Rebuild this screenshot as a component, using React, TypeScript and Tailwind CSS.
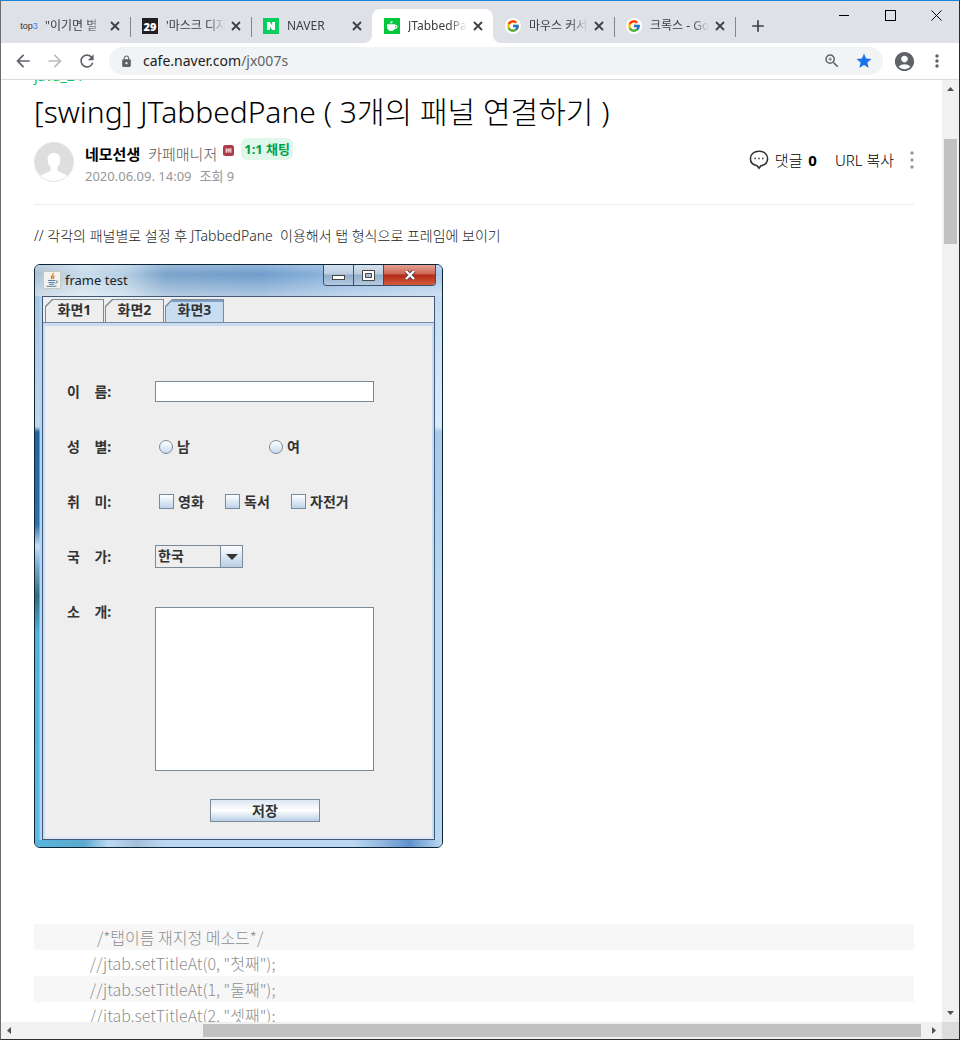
import React from "react";
import {
  MdAccountCircle,
  MdAdd,
  MdArrowBack,
  MdArrowForward,
  MdLock,
  MdMoreVert,
  MdRefresh,
  MdStar,
  MdZoomIn,
} from "react-icons/md";
import { FcGoogle } from "react-icons/fc";

function GoogleIcon() {
  return (
    <span className="flex size-4 items-center justify-center rounded-full bg-white">
      <FcGoogle size={14} />
    </span>
  );
}

function CafeIcon() {
  return (
    <svg viewBox="0 0 16 16" className="size-4">
      <rect width="16" height="16" fill="#03c73c" />
      <path
        d="M3 6.3h8.2v.8c1.2-.3 2.4.1 2.4 1.5 0 1.500-1.300 2.400-2.900 2.400C10 12.300 8.800 13 7.200 13 4.600 13 3 11.200 3 8.500Z"
        fill="#fff"
      />
      <path d="M11.200 8.100c.8-.2 1.300 0 1.300.5 0 .6-.5 1-1.400 1.200Z" fill="#03c73c" />
      <path d="M6.200 5.500C6 4.200 6.800 3.200 8.600 3 8.700 4.400 8 5.400 6.200 5.500Z" fill="#fff" />
    </svg>
  );
}

function NaverIcon() {
  return (
    <svg viewBox="0 0 16 16" className="size-4">
      <rect width="16" height="16" fill="#03cf5d" />
      <path d="M4 4h2.900l2.300 3.400V4H12v8H9.200L6.900 8.600V12H4Z" fill="#fff" />
    </svg>
  );
}

function TwentyNineIcon() {
  return (
    <span className="flex size-4 items-center justify-center bg-[#231f20] font-['Open_Sans'] text-[11px] leading-none font-extrabold text-white">
      29
    </span>
  );
}

function TopIcon() {
  return (
    <span className="flex size-4 items-center justify-center font-['Liberation_Sans'] text-[9px] leading-none text-[#333]">
      top<span className="text-[#3d7ff0]">3</span>
    </span>
  );
}

type Tab = { title: string; icon: React.ReactNode; active?: boolean; line?: boolean };

const tabs: Tab[] = [
  { title: '"이기면 별', icon: <TopIcon />, line: true },
  { title: "'마스크 디자", icon: <TwentyNineIcon />, line: true },
  { title: "NAVER", icon: <NaverIcon /> },
  { title: "JTabbedPane", icon: <CafeIcon />, active: true },
  { title: "마우스 커서", icon: <GoogleIcon />, line: true },
  { title: "크록스 - Google", icon: <GoogleIcon />, line: true },
];

function BrowserTab({ tab }: { tab: Tab }) {
  return (
    <div
      className={
        tab.active
          ? "relative flex h-[34px] w-[121px] items-center rounded-t-lg bg-white pr-2.5 pl-3"
          : "relative flex h-[34px] w-[121px] items-center pr-2.5 pl-3"
      }
    >
      {tab.active && (
        <>
          <svg viewBox="0 0 8 8" className="absolute bottom-0 -left-2 size-2">
            <path d="M8 0v8H0A8 8 0 0 0 8 0Z" fill="#fff" />
          </svg>
          <svg viewBox="0 0 8 8" className="absolute -right-2 bottom-0 size-2">
            <path d="M0 0v8h8A8 8 0 0 1 0 0Z" fill="#fff" />
          </svg>
        </>
      )}
      {tab.icon}
      <a
        href="#"
        className="mr-1.5 ml-2 min-w-0 flex-1 overflow-hidden [mask-image:linear-gradient(to_right,#000_70%,transparent)] text-xs leading-4 whitespace-nowrap text-[#3c4043]"
      >
        {tab.title}
      </a>
      <button aria-label="탭 닫기">
        <svg viewBox="0 0 10 10" className="size-2.5" stroke="#3c4043" strokeWidth="1.800" fill="none">
          <path d="m1 1 8 8M9 1 1 9" />
        </svg>
      </button>
      {tab.line && <span className="absolute top-2 -right-px h-5 w-px bg-[#80868b]" />}
    </div>
  );
}

function TabStrip() {
  return (
    <div className="flex h-[42px] items-end justify-between bg-[#dee1e6]">
      <div className="flex items-center pl-2">
        {tabs.map((tab) => (
          <BrowserTab key={tab.title} tab={tab} />
        ))}
        <button aria-label="새 탭" className="ml-[13px] text-[#3c4043]">
          <MdAdd size={20} />
        </button>
      </div>
      <div className="flex self-start">
        <button aria-label="최소화" className="flex h-[28px] w-[46px] items-center justify-center">
          <span className="h-px w-2.5 bg-black" />
        </button>
        <button aria-label="최대화" className="flex h-[28px] w-[46px] items-center justify-center">
          <span className="size-[11px] border border-black" />
        </button>
        <button aria-label="닫기" className="flex h-[28px] w-[46px] items-center justify-center">
          <svg viewBox="0 0 11 11" className="size-[11px]" stroke="#000" fill="none">
            <path d="m.5.5 10 10M10.500.5l-10 10" />
          </svg>
        </button>
      </div>
    </div>
  );
}

function Toolbar() {
  return (
    <div className="flex h-[37px] items-center border-b border-[#dadce0] bg-white pr-3 pl-3 text-[#5f6368]">
      <div className="flex items-center gap-3">
        <button aria-label="뒤로">
          <MdArrowBack size={20} />
        </button>
        <button aria-label="앞으로" className="text-[#babcbe]">
          <MdArrowForward size={20} />
        </button>
        <button aria-label="새로고침">
          <MdRefresh size={20} />
        </button>
      </div>
      <div className="ml-3 flex h-7 flex-1 items-center rounded-full bg-[#f1f3f4] pr-2.5 pl-[11px]">
        <MdLock size={13} />
        <a href="#" className="ml-2.5 flex-1 text-sm text-[#202124]">
          cafe.naver.com<span className="text-[#5f6368]">/jx007s</span>
        </a>
        <button aria-label="확대/축소">
          <MdZoomIn size={18} />
        </button>
        <button aria-label="북마크" className="ml-3.5 text-[#1a73e8]">
          <MdStar size={18} />
        </button>
      </div>
      <button aria-label="사용자" className="ml-2.5">
        <MdAccountCircle size={23} />
      </button>
      <button aria-label="메뉴" className="ml-[11px]">
        <MdMoreVert size={20} />
      </button>
    </div>
  );
}

function Avatar() {
  return (
    <svg viewBox="0 0 40 40" className="size-10">
      <clipPath id="face">
        <circle cx="20" cy="20" r="19.500" />
      </clipPath>
      <circle cx="20" cy="20" r="19.500" fill="#dedede" />
      <g clipPath="url(#face)" fill="#fff">
        <path d="M20 11c3.900 0 6.400 2.700 6.400 6.600 0 3-1.100 5.500-2.900 7v3.200c0 1 .7 1.600 2 2.100l5 2c1.800.8 3.500 2 4.500 4.100v5H5v-5c1-2.100 2.700-3.300 4.500-4.100l5-2c1.300-.5 2-1.100 2-2.100v-3.200c-1.800-1.500-2.900-4-2.900-7 0-3.900 2.500-6.600 6.400-6.600Z" />
      </g>
      <circle cx="20" cy="20" r="19.500" fill="none" stroke="#e4e4e4" />
    </svg>
  );
}

function PostHeader() {
  return (
    <header className="border-b border-[#ebecef] pb-[18px]">
      <a href="#" className="block text-sm leading-5 text-[#03c75a]">
        java_24
      </a>
      <h1 className="mt-1.5 text-[30px] leading-10 font-light text-black">
        [swing] JTabbedPane ( 3개의 패널 연결하기 )
      </h1>
      <div className="mt-2.5 flex items-center justify-between">
        <div className="flex items-start">
          <Avatar />
          <div className="ml-[11px]">
            <div className="flex items-center text-[15px] leading-6">
              <b className="font-bold text-black">네모선생</b>
              <span className="ml-2 font-light text-[#555]">카페매니저</span>
              <svg viewBox="0 0 11 11" className="mt-[3px] ml-1.5 size-[11px] self-start">
                <rect width="11" height="11" rx="2.500" fill="#b03a48" />
                <path d="M2.500 3.200h6v4.600h-6z" fill="#e9bfc4" />
                <path d="M4 6.500h.9v1.300H4zM6.100 6.500H7v1.300h-.9zM3.800 3.200l.7 1 .9-1 .9 1 .8-1Z" fill="#b03a48" />
              </svg>
              <button className="-mt-1 ml-[7px] h-[22px] self-start rounded-md bg-[#e0f8eb] px-[3px] text-[13px] leading-[22px] font-bold text-[#009f47]">
                1:1 채팅
              </button>
            </div>
            <div className="flex gap-2 text-[13px] leading-5 text-[#979797]">
              <span>2020.06.09. 14:09</span>
              <span>조회 9</span>
            </div>
          </div>
        </div>
        <div className="flex items-center pb-2 text-[15px] font-light text-black">
          <svg viewBox="0 0 20 20" className="size-5" fill="none" stroke="#333">
            <path
              d="M10 1.200c5 0 8.600 3 8.600 7.300 0 3.800-2.600 6.500-6.700 7.200L10 18.200l-1.900-2.500c-4.100-.7-6.700-3.400-6.700-7.200C1.400 4.200 5 1.200 10 1.200Z"
              strokeWidth="1.600"
            />
            <path d="M5.400 8.500h1.500M9.200 8.500h1.500M13 8.500h1.500" strokeWidth="1.500" />
          </svg>
          <a href="#" className="ml-1.5">
            댓글 <b className="ml-0.5 font-bold">0</b>
          </a>
          <a href="#" className="ml-[18px]">
            URL 복사
          </a>
          <button aria-label="더보기" className="ml-4">
            <svg viewBox="0 0 4 18" className="h-[18px] w-1" fill="#999">
              <circle cx="2" cy="2" r="1.700" />
              <circle cx="2" cy="9" r="1.700" />
              <circle cx="2" cy="16" r="1.700" />
            </svg>
          </button>
        </div>
      </div>
    </header>
  );
}

function FrameTab({ name, selected }: { name: string; selected?: boolean }) {
  return (
    <button
      role="tab"
      aria-selected={!!selected}
      className="h-[23px] w-[59px] bg-[#7a8a99] p-px pb-0 [clip-path:polygon(7px_0,100%_0,100%_100%,0_100%,0_7px)]"
    >
      <span
        className={
          selected
            ? "block h-full border-t-2 border-[#7f9fc4] bg-[#c8ddf2] text-sm leading-4 [clip-path:polygon(7px_0,100%_0,100%_100%,0_100%,0_7px)]"
            : "block h-full bg-[#eee] text-sm leading-5 [clip-path:polygon(7px_0,100%_0,100%_100%,0_100%,0_7px)]"
        }
      >
        {name}
      </span>
    </button>
  );
}

const genders = ["남", "여"];
const hobbies = ["영화", "독서", "자전거"];

function SwingForm() {
  return (
    <form className="pt-[38px] pl-[22px] text-sm leading-5" onSubmit={(e) => e.preventDefault()}>
      <div className="flex h-[55px] items-center">
        <label htmlFor="name" className="w-[88px] whitespace-pre">
          이{"    "}름:
        </label>
        <input id="name" className="h-[21px] w-[219px] border border-[#7a8a99] bg-white px-1" />
      </div>
      <div className="flex h-[55px] items-center">
        <span className="w-[88px] whitespace-pre">성{"    "}별:</span>
        {genders.map((gender) => (
          <label key={gender} className="flex w-[110px] items-center gap-1 pl-1">
            <input
              type="radio"
              name="gender"
              className="size-3.5 appearance-none rounded-full border border-[#7a8a99] bg-linear-to-b from-white to-[#c6dbee]"
            />
            {gender}
          </label>
        ))}
      </div>
      <div className="flex h-[55px] items-center">
        <span className="w-[88px] whitespace-pre">취{"    "}미:</span>
        {hobbies.map((hobby) => (
          <label key={hobby} className="flex min-w-[66px] items-center gap-1 pl-1 whitespace-nowrap">
            <input
              type="checkbox"
              className="size-[15px] appearance-none border border-[#7a8a99] bg-linear-to-b from-white to-[#bdd4ea]"
            />
            {hobby}
          </label>
        ))}
      </div>
      <div className="flex h-[55px] items-center">
        <label htmlFor="country" className="w-[88px] whitespace-pre">
          국{"    "}가:
        </label>
        <div className="flex h-[23px] w-[88px] border border-[#7a8a99]">
          <select id="country" className="min-w-0 flex-1 appearance-none bg-[#eee] pb-0.5 pl-0.5 leading-5">
            <option>한국</option>
          </select>
          <span className="flex w-[22px] items-center justify-center border-l border-[#7a8a99] bg-linear-to-b from-white to-[#b8cfe5]">
            <svg viewBox="0 0 12 6" className="h-1.5 w-3">
              <path d="M0 0h12L6 6Z" fill="#333" />
            </svg>
          </span>
        </div>
      </div>
      <div className="flex items-start">
        <label htmlFor="intro" className="w-[88px] pt-[18px] whitespace-pre">
          소{"    "}개:
        </label>
        <textarea
          id="intro"
          className="mt-[23px] h-[164px] w-[219px] resize-none border border-[#7a8a99] bg-white px-1"
        />
      </div>
      <button className="mt-7 ml-[143px] block h-[23px] w-[110px] border border-[#7a8a99] bg-linear-to-b from-[#dbe7f3] via-white to-[#b8cfe5] leading-5">
        저장
      </button>
    </form>
  );
}

function SwingFrame() {
  return (
    <section className="w-[409px] overflow-hidden rounded-md border border-[#0d2436] bg-[#bcd6f0] font-bold text-[#333]">
      <div className="flex h-[31px] items-start justify-between bg-[linear-gradient(to_bottom,#ffffff40,transparent_30%,#ffffff70),linear-gradient(to_right,#a9bfd4,#c9dcea_12%,#b4cfe4_22%,#7ba3cb_32%,#6f9dcb_55%,#8fb6df_75%,#a9c8e8)] pr-1.5 pl-2">
        <div className="flex items-center gap-1 pt-1.5">
          <svg viewBox="0 0 18 18" className="size-[18px]" fill="none">
            <rect x=".5" y=".5" width="17" height="17" fill="#f3f3ee" stroke="#c9c9c0" />
            <path d="M10 2c1.500 2-3.500 3.300-1 6M11.500 5c-1.500 1-2 1.500-1 3" stroke="#e0782a" strokeWidth="1.300" />
            <path d="M5 9.500h7.500M5.500 11.500h6.500M6 13.300h5M3.500 15.300h10M13 10c2.500-.5 2 2-.5 2.500" stroke="#5b7fa6" />
          </svg>
          <h2 className="text-[13px] leading-4 font-normal text-[#222]">frame test</h2>
        </div>
        <div className="flex h-[21px] overflow-hidden rounded-b-[4px] border border-t-0 border-[#3d4f66]">
          <button
            aria-label="최소화"
            className="flex w-[30px] items-end justify-center border-r border-[#3d4f66] bg-[linear-gradient(#d4e0ec,#bccde0_45%,#93aeca_50%,#b4cae0)] pb-[5px]"
          >
            <span className="h-[5px] w-[13px] border border-[#444] bg-white" />
          </button>
          <button
            aria-label="최대화"
            className="flex w-[30px] items-center justify-center border-r border-[#3d4f66] bg-[linear-gradient(#d4e0ec,#bccde0_45%,#93aeca_50%,#b4cae0)]"
          >
            <svg viewBox="0 0 13 11" className="h-[11px] w-[13px]" fill="none" stroke="#444">
              <path d="M.5.5h12v10H.5Z" fill="#fff" />
              <path d="M3.500 3.500h6v4h-6Z" fill="#a9bfd6" />
            </svg>
          </button>
          <button
            aria-label="닫기"
            className="flex w-[51px] items-center justify-center bg-[linear-gradient(#e2a193,#cf6553_45%,#b02a17_50%,#d35a3e)]"
          >
            <svg viewBox="0 0 12 10" className="h-2.5 w-3" fill="none">
              <path d="m2 1 8 8M10 1 2 9" stroke="#5b3a3a" strokeWidth="4" />
              <path d="m2 1 8 8M10 1 2 9" stroke="#fff" strokeWidth="2.400" />
            </svg>
          </button>
        </div>
      </div>
      <div className="flex">
        <div className="w-[7px] bg-[linear-gradient(to_right,transparent_55%,#b5d3ef_75%),linear-gradient(#a9c4dd,#c2d8ea_24%,#1f63a5_25%,#2a70b0_42%,#c9dff0_46%,#7fb2d8_49%,#2f6d80_55%,#4fb3dc_62%,#5bbbe6)]" />
        <div className="min-w-0 flex-1 border border-[#3f5878] bg-[#eee]">
          <div role="tablist" className="flex gap-px border-b border-[#7a8a99] pt-0.5 pl-0.5">
            <FrameTab name="화면1" />
            <FrameTab name="화면2" />
            <FrameTab name="화면3" selected />
          </div>
          <div className="h-[516px] border-2 border-t-[3px] border-[#c8ddf2] border-b-[#dce8f4]">
            <SwingForm />
          </div>
        </div>
        <div className="w-[7px] bg-[linear-gradient(#c4dbf0,#d9ebfa_24%,#a9c9ea_25%,#bcd8f2_60%,#b9d6f0)]" />
      </div>
      <div className="h-[7px] bg-[linear-gradient(to_right,#58b6dc,#5aa9cf_12%,#bcd8f2_18%,#a4bfdc_25%,#bcd8f2_32%,#bcd8f2_78%,#8db4dc_86%,#5f93cc_92%,#bcd8f2)]" />
    </section>
  );
}

const code = [
  '           /*탭이름 재지정 메소드*/',
  '         //jtab.setTitleAt(0, "첫째");',
  '         //jtab.setTitleAt(1, "둘째");',
  '         //jtab.setTitleAt(2, "셋째");',
];

function CodeBlock() {
  return (
    <ol className="mt-[76px]">
      {code.map((line) => (
        <li
          key={line}
          className="pl-6 font-['Noto_Sans_CJK_KR',sans-serif] text-base leading-[26px] font-light whitespace-pre text-[#8e8e8e] odd:bg-[#f7f7f7]"
        >
          {line}
        </li>
      ))}
    </ol>
  );
}

function VerticalScrollbar() {
  return (
    <div className="flex w-[17px] flex-col items-center justify-between bg-[#f1f1f1]">
      <div>
        <svg viewBox="0 0 17 17" className="-mx-0.5 size-[17px]">
          <path d="M5 11h7L8.500 7Z" fill="#505050" />
        </svg>
        <div className="mt-[42px] h-[105px] w-[13px] bg-[#c1c1c1]" />
      </div>
      <svg viewBox="0 0 17 17" className="size-[17px]">
        <path d="M5 6h7l-3.500 4Z" fill="#505050" />
      </svg>
    </div>
  );
}

function HorizontalScrollbar() {
  return (
    <div className="flex h-[17px] bg-[#f1f1f1]">
      <svg viewBox="0 0 17 17" className="size-[17px]">
        <path d="M10 5v7L6 8.500Z" fill="#505050" />
      </svg>
      <div className="my-0.5 mr-1 ml-[185px] flex-1 bg-[#c1c1c1]" />
      <svg viewBox="0 0 17 17" className="size-[17px]">
        <path d="M7 5v7l4-3.500Z" fill="#505050" />
      </svg>
      <span className="w-[17px] bg-[#dcdcdc]" />
    </div>
  );
}

export default function App() {
  return (
    <div className="flex h-screen flex-col overflow-hidden border border-t-[#1883d7] border-r-[#2b2b2b] border-b-[#2a2f36] border-l-[#6b6b6b] bg-white font-['Noto_Sans','Noto_Sans_CJK_KR',sans-serif]">
      <TabStrip />
      <Toolbar />
      <div className="flex min-h-0 flex-1">
        <main className="min-w-0 flex-1 overflow-hidden pr-7 pl-[33px]">
          <article className="-mt-3.5">
            <PostHeader />
            <p className="mt-[21px] mb-[18px] text-sm leading-5 font-light whitespace-pre text-[#222]">
              // 각각의 패널별로 설정 후 JTabbedPane{"  "}이용해서 탭 형식으로 프레임에 보이기
            </p>
            <SwingFrame />
            <CodeBlock />
          </article>
        </main>
        <VerticalScrollbar />
      </div>
      <HorizontalScrollbar />
    </div>
  );
}
